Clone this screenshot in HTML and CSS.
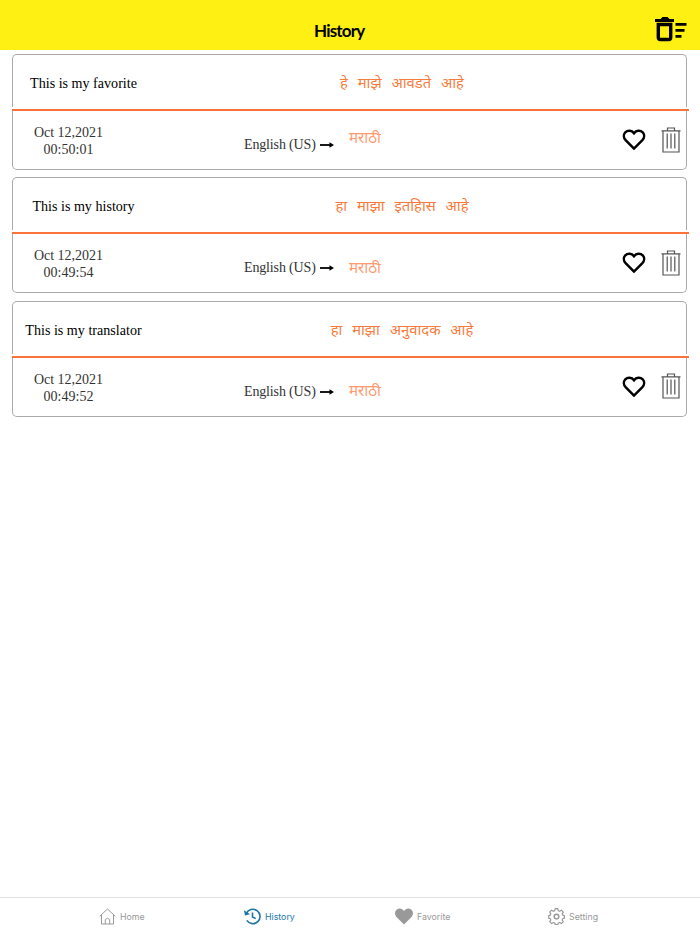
FILE: index.html
```html
<!DOCTYPE html>
<html lang="en">

<head>
    <meta charset="UTF-8">
    <meta name="viewport" content="width=device-width, initial-scale=1.0">
    <title>History</title>
    <link rel="stylesheet" href="styles.css">
</head>

<body>
    <!-- shared icons -->
    <svg class="sprite">
        <symbol id="icon-heart" viewBox="0 0 24 22">
            <path d="M12 19.600 3.600 11.200C1.500 9 1.300 5.600 3.300 3.300 5.600 1 9.700 1.100 12 4.200 14.300 1.100 18.400 1 20.700 3.300 22.700 5.600 22.500 9 20.400 11.200Z" fill="none" stroke="#000" stroke-width="2.500" />
        </symbol>
        <symbol id="icon-trash" viewBox="0 0 20 26">
            <path d="M.5 3.800h19M6.500 3.500V1h7v2.500M2 4v21h16V4M6.200 6.500v15M10 6.500v15M13.800 6.500v15" fill="none" stroke="#555" stroke-width="1.200" />
        </symbol>
        <symbol id="icon-arrow" viewBox="0 0 14 6">
            <path d="M0 3h11" stroke="#000" stroke-width="1.800" />
            <path d="M9.500.3 14 3 9.500 5.700Z" />
        </symbol>
    </svg>

    <header class="header">
        <h1>History</h1>
        <svg class="clear-icon" viewBox="0 0 32 25">
            <path d="M0 2h5.500L7.500 0h5l2 2H19v3H0Z" />
            <path d="M3.300 7.500h12.400V20.500q0 2-2 2H5.300q-2 0-2-2Z" fill="none" stroke="#000" stroke-width="3.400" />
            <path d="M20.500 6H31.500v2.700H20.500ZM20.500 12h9v2.700h-9ZM20.500 18h6v2.700h-6Z" />
        </svg>
    </header>

    <main class="history-list">
        <div class="card">
            <div class="card-top">
                <span class="source">This is my favorite</span>
                <span class="translated">हे माझे आवडते आहे</span>
            </div>
            <div class="divider"></div>
            <div class="card-bottom">
                <p class="date">Oct 12,2021<br>00:50:01</p>
                <span class="lang-from">English (US)</span>
                <svg class="arrow"><use href="#icon-arrow" /></svg>
                <span class="lang-to">मराठी</span>
                <svg class="heart"><use href="#icon-heart" /></svg>
                <svg class="trash"><use href="#icon-trash" /></svg>
            </div>
        </div>

        <div class="card second">
            <div class="card-top">
                <span class="source">This is my history</span>
                <span class="translated">हा माझा इतहिास आहे</span>
            </div>
            <div class="divider"></div>
            <div class="card-bottom">
                <p class="date">Oct 12,2021<br>00:49:54</p>
                <span class="lang-from">English (US)</span>
                <svg class="arrow"><use href="#icon-arrow" /></svg>
                <span class="lang-to">मराठी</span>
                <svg class="heart"><use href="#icon-heart" /></svg>
                <svg class="trash"><use href="#icon-trash" /></svg>
            </div>
        </div>

        <div class="card third">
            <div class="card-top">
                <span class="source">This is my translator</span>
                <span class="translated">हा माझा अनुवादक आहे</span>
            </div>
            <div class="divider"></div>
            <div class="card-bottom">
                <p class="date">Oct 12,2021<br>00:49:52</p>
                <span class="lang-from">English (US)</span>
                <svg class="arrow"><use href="#icon-arrow" /></svg>
                <span class="lang-to">मराठी</span>
                <svg class="heart"><use href="#icon-heart" /></svg>
                <svg class="trash"><use href="#icon-trash" /></svg>
            </div>
        </div>
    </main>

    <nav class="tabs">
        <a class="tab">
            <svg width="17" height="17" viewBox="0 0 17 17" fill="none" stroke="currentColor">
                <path d="M.7 8.300 8.500 1l7.800 7.300M2.500 7v9h12V7M6.300 16v-4.500q2.200-2.500 4.400 0V16" />
            </svg>
            <span>Home</span>
        </a>
        <a class="tab active">
            <svg width="17" height="17" viewBox="0 0 17 17" fill="none" stroke="currentColor" stroke-width="1.600">
                <path d="M2.300 5.500A7.200 7.200 0 1 1 2.800 12.400M8.500 4.500V9l3.200 1.600" />
                <path d="M0 2.300 1 7.500 6 6.300Z" fill="currentColor" stroke="none" />
            </svg>
            <span>History</span>
        </a>
        <a class="tab">
            <svg width="18" height="17" viewBox="0 0 18 17" fill="currentColor">
                <path d="M9 16.500 1.500 9C-.6 6.500-.3 3.500 1.600 1.800 4-.3 7.300.2 9 3 10.700.2 14-.3 16.400 1.800 18.300 3.500 18.600 6.500 16.500 9Z" />
            </svg>
            <span>Favorite</span>
        </a>
        <a class="tab">
            <svg width="17" height="17" viewBox="0 0 17 17" fill="none" stroke="currentColor" stroke-width="1.200" stroke-linejoin="round">
                <path d="M7.200.7h2.600l.5 2.100 1.300.5 1.800-1.100 1.900 1.900-1.100 1.800.5 1.300 1.700.4v2.600l-1.700.4-.5 1.300 1.100 1.800-1.900 1.900-1.800-1.100-1.300.5-.5 1.500H7.200l-.5-1.500-1.300-.5-1.800 1.100-1.900-1.900 1.100-1.800-.5-1.300L.7 10.200V7.600l1.600-.4.5-1.300-1.100-1.800 1.900-1.900 1.800 1.100 1.300-.5Z" />
                <circle cx="8.500" cy="8.600" r="2.300" stroke-width="1.500" />
            </svg>
            <span>Setting</span>
        </a>
    </nav>
</body>

</html>
```
FILE: styles.css
```css
* {
    box-sizing: border-box;
}

body {
    margin: 0;
    height: 934px;
    display: flex;
    flex-direction: column;
    font-family: "Liberation Serif", "Noto Sans", serif;
    background-color: #fff;
}

.sprite {
    display: none;
}

.header {
    height: 50px;
    display: grid;
    grid-template-columns: 314px 1fr auto;
    padding: 11px 13px 0 0;
    background-color: #fff014;
}

.header h1 {
    grid-column: 2;
    margin: 9px 0 0;
    font-family: Lato, sans-serif;
    font-size: 17px;
    line-height: 22px;
    letter-spacing: -0.8px;
}

.clear-icon {
    margin-top: 6px;
    width: 32px;
    height: 25px;
}

.history-list {
    flex: 1;
    padding: 4px 11px 0 12px;
}

.card {
    height: 116px;
    margin-bottom: 7px;
    display: flex;
    flex-direction: column;
}

.card.second {
    margin-bottom: 8px;
}

.card-top,
.card-bottom {
    width: 675px;
    border: 1px solid #aaa;
}

.card-top {
    height: 53px;
    display: grid;
    grid-template-columns: 141px 496px;
    align-items: center;
    padding-top: 5px;
    border-bottom: none;
    border-radius: 5px 5px 0 0;
    text-align: center;
}

.source {
    margin-top: -1px;
    font-size: 14.100px;
}

.translated {
    margin-top: -3px;
    color: #f77b3d;
    font-family: "Noto Sans", "Noto Sans Devanagari", sans-serif;
    font-size: 14.800px;
    word-spacing: 6px;
}

.divider {
    height: 2px;
    margin-top: 2px;
    background-color: #f9733a;
}

.card-bottom {
    flex: 1;
    display: grid;
    grid-template-columns: 111px 196px 14px 74px 1fr 24px 15px 20px;
    align-items: start;
    padding-right: 5px;
    border-top: none;
    border-radius: 0 0 5px 5px;
}

.date {
    margin: 14px 0 0;
    color: #333;
    font-size: 14px;
    line-height: 16.500px;
    text-align: center;
}

.lang-from {
    margin-top: 26px;
    padding-left: 120px;
    color: #333;
    font-size: 14px;
    line-height: 16px;
    letter-spacing: -0.150px;
    white-space: nowrap;
}

.arrow {
    width: 14px;
    height: 6px;
    margin-top: 31px;
}

.lang-to {
    margin: 16px 0 0 15px;
    color: #ff9a70;
    font-family: "Noto Sans", "Noto Sans Devanagari", sans-serif;
    font-size: 15.200px;
    line-height: 20px;
}

.second .lang-to {
    margin-top: 23px;
}

.third .lang-to {
    margin-top: 22px;
}

.heart {
    grid-column: 6;
    width: 24px;
    height: 22px;
    margin-top: 18px;
}

.trash {
    grid-column: 8;
    width: 20px;
    height: 26px;
    margin-top: 16px;
}

.third .trash {
    margin-top: 15px;
}

.tabs {
    height: 37px;
    display: grid;
    grid-template-columns: 145px 151px 153px 1fr;
    padding-left: 99px;
    border-top: 1px solid #e2e2e2;
    font-family: Inter, sans-serif;
    font-size: 8.800px;
    color: #999;
}

.tab {
    display: flex;
    align-items: center;
    gap: 4px;
}

.tab.active {
    color: #1b76a8;
}
```
